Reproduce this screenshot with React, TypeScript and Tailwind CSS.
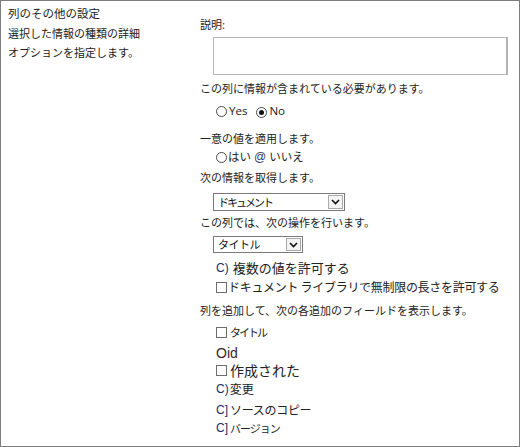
import type { ReactNode } from "react";

const jp = "font-['Noto_Sans_CJK_JP','Noto_Sans',sans-serif]";
const latin = "font-['Liberation_Sans',Arial,sans-serif]";

function Radio({ checked = false }: { checked?: boolean }) {
  return (
    <span className="inline-flex h-[11px] w-[11px] shrink-0 items-center justify-center rounded-full border border-[#4a4a4a] bg-white">
      {checked ? <span className="h-[5px] w-[5px] rounded-full bg-[#111]" /> : null}
    </span>
  );
}

function Checkbox() {
  return <span className="inline-block h-[11px] w-[11px] shrink-0 border border-[#6d6d6d] bg-white" />;
}

function Select({ width, children }: { width: string; children: ReactNode }) {
  return (
    <div className={`ml-[13px] flex items-stretch border border-[#7a7a7a] bg-white ${width}`}>
      <div className="flex flex-1 items-center overflow-hidden pl-[4px] text-[11px] leading-none text-[#111]">
        {children}
      </div>
      <div className="m-[1px] flex w-[15px] items-center justify-center border border-[#a9a9a9] bg-[#f4f4f4]">
        <svg width="9" height="6" viewBox="0 0 9 6" fill="none">
          <path d="M1 1l3.5 3.5L8 1" stroke="#111" strokeWidth="1.6" />
        </svg>
      </div>
    </div>
  );
}

function Label({ className = "", children }: { className?: string; children: ReactNode }) {
  return <p className={`h-[16px] text-[11px] leading-[16px] text-[#222] ${className}`}>{children}</p>;
}

function Mark({ children }: { children: ReactNode }) {
  return <span className={`${latin} text-[12px] text-[#1e2c66]`}>{children}</span>;
}

export default function App() {
  return (
    <div className={`${jp} box-border flex h-[447px] w-[520px] overflow-hidden border border-[#7d7d7d] bg-white text-[#222]`}>
      {/* section caption */}
      <div className="w-[199px] shrink-0 pl-[7px] pt-[4px]">
        <p className="h-[16px] text-[11.5px] leading-[16px] text-[#222]">列のその他の設定</p>
        <div className="mt-[3px] text-[11px] leading-[19px] text-[#222]">
          <p>選択した情報の種類の詳細</p>
          <p>オプションを指定します。</p>
        </div>
      </div>

      {/* field settings */}
      <div className="flex flex-1 flex-col pt-[15px]">
        <Label>
          説明<span className="text-[#8a1c1c]">:</span>
        </Label>
        <div className="ml-[13px] mt-[5px] h-[38px] w-[295px] border border-[#b4b4b4] border-r-2 bg-white" />

        <Label className="mt-[5px]">この列に情報が含まれている必要があります。</Label>
        <div className="ml-[16px] mt-[7px] flex h-[16px] items-center font-['Open_Sans',sans-serif] text-[11.5px] text-[#222]">
          <Radio />
          <span className="ml-[2px]">Yes</span>
          <span className="ml-[9px]">
            <Radio checked />
          </span>
          <span className="ml-[2px]">No</span>
        </div>

        <Label className="mt-[11px]">一意の値を適用します。</Label>
        <div className="ml-[16px] mt-[3px] flex h-[16px] items-center text-[11.5px] text-[#222]">
          <Radio />
          <span className="ml-[1px]">はい</span>
          <span className={`${latin} ml-[3px] text-[12px] text-[#2c3766]`}>@</span>
          <span className="ml-[3px]">いいえ</span>
        </div>

        <Label className="mt-[4px]">次の情報を取得します。</Label>
        <div className="mt-[8px] h-[18px]">
          <Select width="w-[132px] h-[18px]">
            <span className="tracking-[-2px]">ドキュメント</span>
          </Select>
        </div>

        <Label className="mt-[3px]">この列では、次の操作を行います。</Label>
        <div className="mt-[6px] h-[17px]">
          <Select width="w-[90px] h-[17px]">
            <span className="tracking-[-0.5px]">タイトル</span>
          </Select>
        </div>

        <div className="ml-[16px] mt-[7px] flex h-[16px] items-center text-[13px] text-[#222]">
          <Mark>C)</Mark>
          <span className="ml-[4px]">複数の値を許可する</span>
        </div>
        <div className="ml-[16px] mt-[3px] flex h-[16px] items-center text-[12px] text-[#222]">
          <Checkbox />
          <span className="ml-[1px] tracking-[-0.3px]">ドキュメント ライブラリで無制限の長さを許可する</span>
        </div>

        <Label className="mt-[7px]">列を追加して、次の各追加のフィールドを表示します。</Label>
        <div className="ml-[16px] mt-[6px] flex h-[16px] items-center text-[11px] text-[#222]">
          <Checkbox />
          <span className="ml-[3px] tracking-[-2px]">タイトル</span>
        </div>
        <p className={`${latin} ml-[16px] mt-[5px] h-[16px] text-[14px] leading-[16px] text-[#3a1f28]`}>Oid</p>
        <div className="ml-[16px] mt-[1px] flex h-[16px] items-center text-[14px] text-[#222]">
          <Checkbox />
          <span className="ml-[3px]">作成された</span>
        </div>
        <div className="ml-[16px] mt-[3px] flex h-[16px] items-center text-[12px] text-[#222]">
          <Mark>C)</Mark>
          <span className="ml-[1px]">変更</span>
        </div>
        <div className="ml-[16px] mt-[5px] flex h-[16px] items-center text-[12px] text-[#222]">
          <Mark>C]</Mark>
          <span className="ml-[2px] tracking-[-0.3px]">ソースのコピー</span>
        </div>
        <div className="ml-[16px] mt-[2px] flex h-[16px] items-center text-[11px] text-[#222]">
          <Mark>C]</Mark>
          <span className="ml-[2px] tracking-[-1px]">バージョン</span>
        </div>
      </div>
    </div>
  );
}
